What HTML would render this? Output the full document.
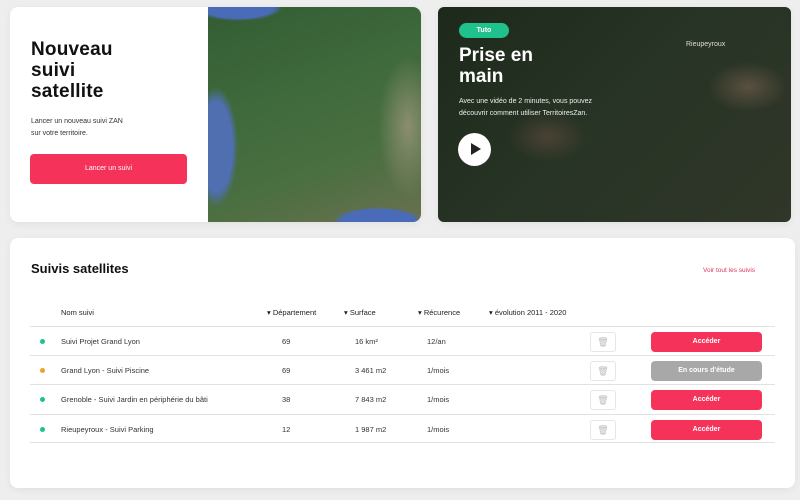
<!DOCTYPE html>
<html><head><meta charset="utf-8"><style>
*{margin:0;padding:0;box-sizing:border-box}
body{width:800px;height:500px;background:#eeeeee;font-family:"Liberation Sans",sans-serif;position:relative;overflow:hidden;color:#222}
.card{position:absolute;background:#fff;border-radius:8px;box-shadow:0 2px 8px rgba(0,0,0,.06);overflow:hidden}
.abs{position:absolute}
h1{font-size:19px;line-height:21px;font-weight:900;color:#111;letter-spacing:.2px}
.btn{position:absolute;background:#f5335a;color:#fff;border-radius:4px;font-size:7px;text-align:center}
.small{font-size:7px;color:#333}
.row{position:absolute;left:30px;width:745px;border-top:1px solid #e2e2e2;height:29px;font-size:7.5px;color:#333}
.row span{position:absolute;top:10px}
.dot{width:5px;height:5px;border-radius:50%;top:12px!important;left:10px}
.trash{position:absolute;left:560px;top:5px;width:26px;height:20px;border:1px solid #e6e6e6;border-radius:3px;color:#bbb;font-size:9px;text-align:center;line-height:18px}
.acc{left:621px;top:5px;width:111px;height:20px;line-height:20px;font-weight:bold}
.th{position:absolute;top:308px;font-size:7.5px;color:#222}
</style></head><body>
<div class="card" style="left:10px;top:7px;width:411px;height:215px">
  <h1 class="abs" style="left:21px;top:32px">Nouveau<br>suivi<br>satellite</h1>
  <div class="abs small" style="left:21px;top:109px;line-height:12px">Lancer un nouveau suivi ZAN<br>sur votre territoire.</div>
  <div class="btn" style="left:20px;top:147px;width:157px;height:30px;line-height:30px">Lancer un suivi</div>
  <div class="abs" style="left:198px;top:0;width:213px;height:215px;background:
   radial-gradient(ellipse 22px 60px at 8px 140px,#4f6fb0 75%,transparent 100%),
   radial-gradient(ellipse 45px 14px at 170px 214px,#4a6cb8 80%,transparent 100%),
   radial-gradient(ellipse 45px 14px at 30px 0px,#4a6cb8 80%,transparent 100%),
   radial-gradient(ellipse 30px 70px at 200px 120px,#8c8e70 0%,transparent 100%),
   linear-gradient(160deg,#335c33,#3f6a3c 40%,#4a6f40 70%,#6a7050)"></div>
</div>
<div class="card" style="left:438px;top:7px;width:353px;height:215px;background:
  radial-gradient(ellipse 40px 25px at 310px 80px,#5a5040 0%,transparent 100%),
  radial-gradient(ellipse 40px 25px at 110px 130px,#4a4234 0%,transparent 100%),
  linear-gradient(135deg,#1d2a1b,#283425 50%,#303629);border-radius:6px">
  <div class="abs" style="left:21px;top:16px;width:50px;height:15px;background:#1fc28b;border-radius:8px;color:#fff;font-size:7px;font-weight:bold;text-align:center;line-height:15px">Tuto</div>
  <div class="abs" style="left:21px;top:38px;color:#fff;font-size:19px;line-height:21px;font-weight:900">Prise en<br>main</div>
  <div class="abs" style="left:21px;top:89px;color:#eee;font-size:7px;line-height:12px">Avec une vidéo de 2 minutes, vous pouvez<br>découvrir comment utiliser TerritoiresZan.</div>
  <div class="abs" style="left:20px;top:126px;width:33px;height:33px;border-radius:50%;background:#fff"><div class="abs" style="left:13px;top:10px;width:0;height:0;border-left:10px solid #222;border-top:6.5px solid transparent;border-bottom:6.5px solid transparent"></div></div>
  <div class="abs" style="left:248px;top:34px;color:#ddd;font-size:7px">Rieupeyroux</div>
</div>
<div class="card" style="left:10px;top:238px;width:785px;height:250px"></div>
<div class="abs" style="left:31px;top:261px;font-size:13px;font-weight:900;color:#111">Suivis satellites</div>
<div class="abs" style="left:703px;top:267px;font-size:6.5px;color:#e03560">Voir tout les suivis</div>
<div class="th" style="left:61px">Nom suivi</div>
<div class="th" style="left:267px">▾ Département</div>
<div class="th" style="left:344px">▾ Surface</div>
<div class="th" style="left:418px">▾ Récurence</div>
<div class="th" style="left:489px">▾ évolution 2011 - 2020</div>
<div class="row" style="top:326px"><span class="dot" style="background:#1fc28b"></span><span style="left:31px">Suivi Projet Grand Lyon</span><span style="left:252px">69</span><span style="left:325px">16 km²</span><span style="left:397px">12/an</span><div class="trash">🗑</div><div class="btn acc">Accéder</div></div>
<div class="row" style="top:355px"><span class="dot" style="background:#f0a030"></span><span style="left:31px">Grand Lyon - Suivi Piscine</span><span style="left:252px">69</span><span style="left:325px">3 461 m2</span><span style="left:397px">1/mois</span><div class="trash">🗑</div><div class="btn acc" style="background:#a8a8a8">En cours d'étude</div></div>
<div class="row" style="top:384px"><span class="dot" style="background:#1fc28b"></span><span style="left:31px">Grenoble - Suivi Jardin en périphérie du bâti</span><span style="left:252px">38</span><span style="left:325px">7 843 m2</span><span style="left:397px">1/mois</span><div class="trash">🗑</div><div class="btn acc">Accéder</div></div>
<div class="row" style="top:414px;border-bottom:1px solid #e2e2e2"><span class="dot" style="background:#1fc28b"></span><span style="left:31px">Rieupeyroux - Suivi Parking</span><span style="left:252px">12</span><span style="left:325px">1 987 m2</span><span style="left:397px">1/mois</span><div class="trash">🗑</div><div class="btn acc">Accéder</div></div>
</body></html>
